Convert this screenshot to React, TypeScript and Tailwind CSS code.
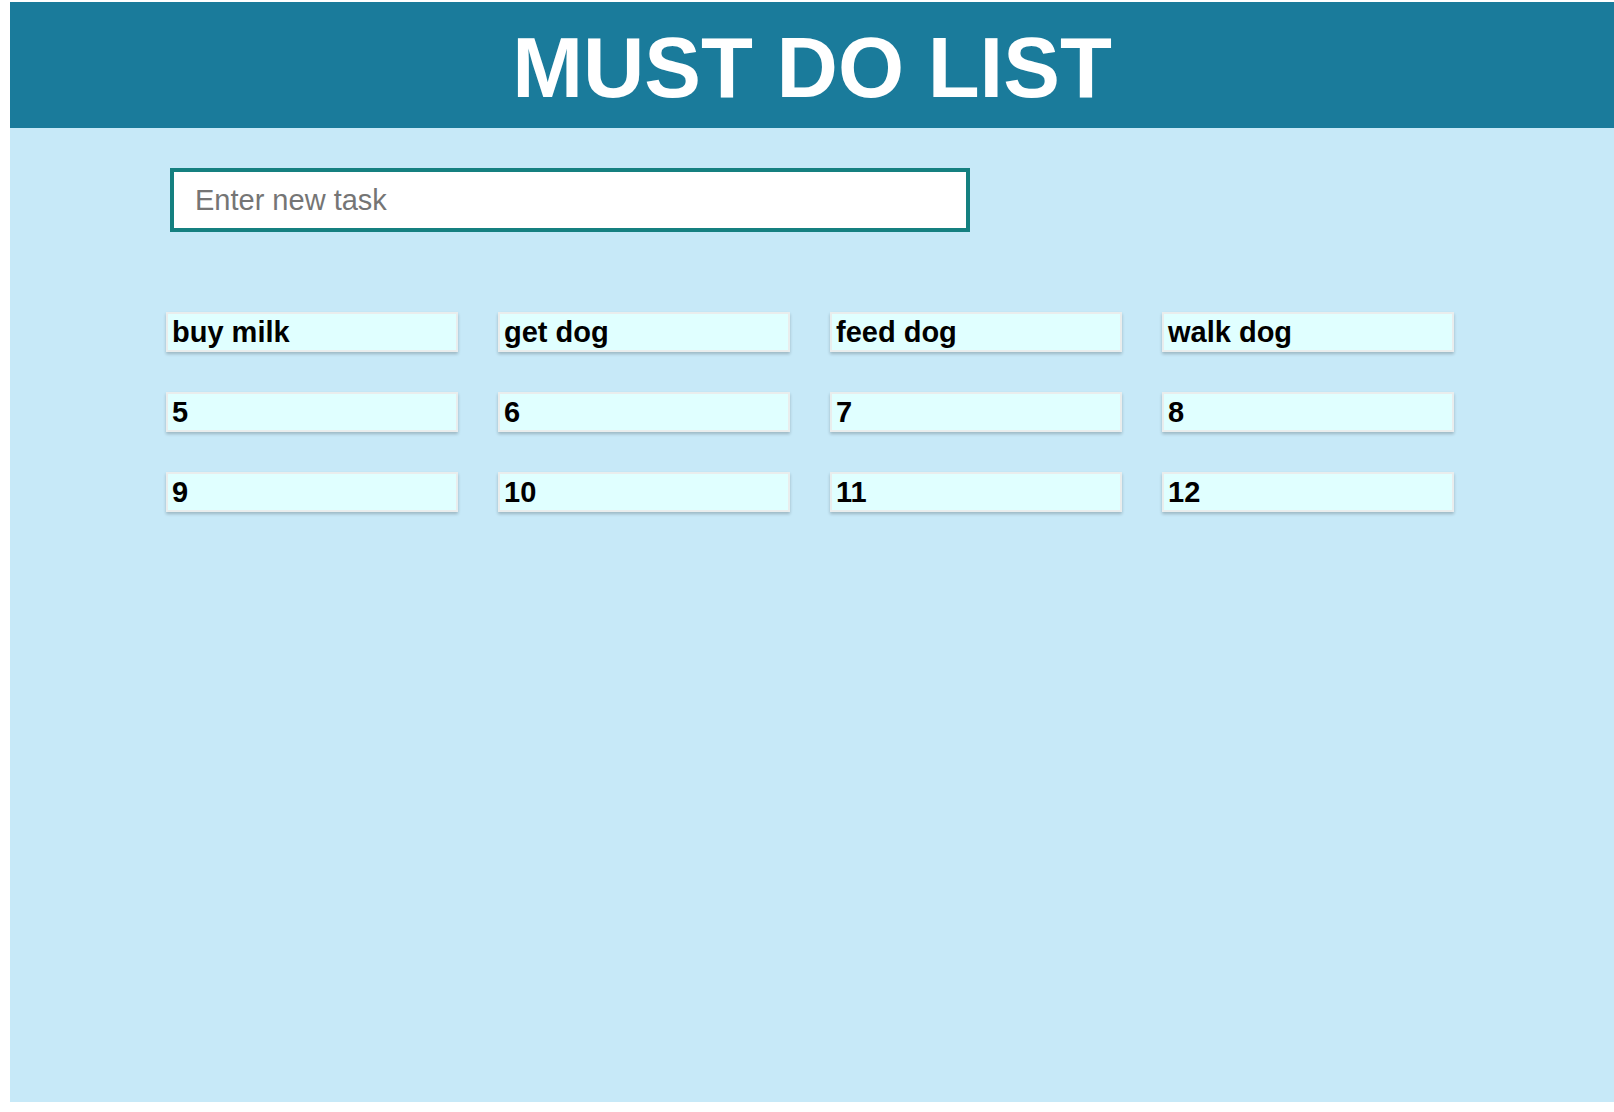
const TASKS = ["buy milk", "get dog", "feed dog", "walk dog", "5", "6", "7", "8", "9", "10", "11", "12"];

function TaskCard({ label }: { label: string }) {
  return (
    <div className="box-border h-[40px] w-[292px] flex items-center border-2 border-[#e9eded] bg-[#e0ffff] pl-[4px] shadow-[0_2px_3px_rgba(0,0,0,0.22)]">
      <span className="text-[29px] font-bold text-black leading-normal mt-[2px]">{label}</span>
    </div>
  );
}

export default function App() {
  return (
    <div className="min-h-[1112px] bg-white pt-[2px] pl-[10px] pb-[10px] font-['Liberation_Sans',Arial,sans-serif]">
      <div className="h-[1100px] flex flex-col bg-[#c7e9f8]">
        {/* Header */}
        <header className="h-[126px] shrink-0 bg-[#1a7b9b] flex items-center justify-center">
          <h1 className="text-[85px] font-bold text-white leading-none mt-[4px]">MUST DO LIST</h1>
        </header>

        {/* New task input */}
        <div className="pt-[40px] pl-[160px]">
          <input
            type="text"
            placeholder="Enter new task"
            className="box-border block h-[64px] w-[800px] border-4 border-[#158080] bg-white pl-[21px] text-[29px] text-black placeholder:text-[#757575] outline-none"
          />
        </div>

        {/* Task grid */}
        <div className="pt-[80px] pl-[156px]">
          <div className="grid grid-cols-[repeat(4,292px)] gap-x-[40px] gap-y-[40px]">
            {TASKS.map((t) => (
              <TaskCard key={t} label={t} />
            ))}
          </div>
        </div>
      </div>
    </div>
  );
}
